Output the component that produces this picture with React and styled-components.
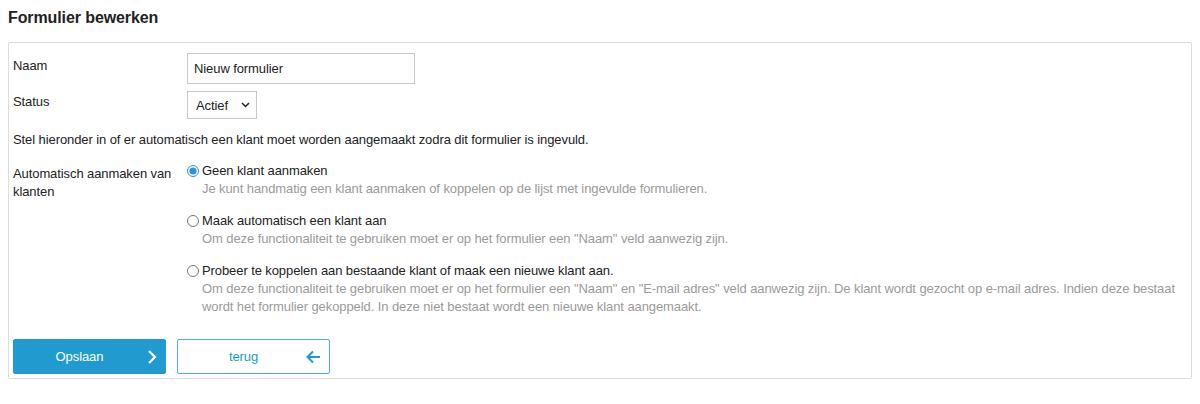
import React from 'react';
import styled, { createGlobalStyle } from 'styled-components';

const GlobalStyle = createGlobalStyle`
  body {
    margin: 8px;
    font-family: "Liberation Sans", Arial, sans-serif;
    font-size: 13px;
    letter-spacing: -0.09px;
    color: #222;
    background: #fff;
  }
`;

const Title = styled.h2`
  margin: 0 0 14px;
  font-size: 16px;
  line-height: 20px;
  font-weight: bold;
  letter-spacing: -0.1px;
  color: #222;
`;

const Panel = styled.div`
  border: 1px solid #dcdcdc;
  border-radius: 2px;
  padding: 10px 4px 4px;
`;

const Row = styled.div`
  display: grid;
  grid-template-columns: 174px 1fr;
  align-items: start;
  margin-top: ${props => props.gap || 0}px;
`;

const Label = styled.div`
  line-height: 18px;
  padding-top: ${props => props.offset || 0}px;
  padding-right: 10px;
`;

const TextInput = styled.input`
  box-sizing: border-box;
  width: 228px;
  height: 31px;
  border: 1px solid #c8c8c8;
  padding: 0 6px;
  font: inherit;
  letter-spacing: inherit;
  color: #222;
  outline: none;
`;

const SelectWrap = styled.div`
  position: relative;
  width: 70px;
  height: 28px;
`;

const Select = styled.select`
  box-sizing: border-box;
  width: 100%;
  height: 100%;
  appearance: none;
  border: 1px solid #c8c8c8;
  border-radius: 0;
  background: #fff;
  padding: 0 0 0 8px;
  font: inherit;
  letter-spacing: inherit;
  color: #222;
`;

const SelectArrow = styled.svg`
  position: absolute;
  right: 7px;
  top: 11px;
  pointer-events: none;
`;

const Intro = styled.p`
  margin: 12px 0 13px;
  line-height: 18px;
`;

const Options = styled.div`
  display: flex;
  flex-direction: column;
  gap: 14px;
`;

const Option = styled.label`
  display: grid;
  grid-template-columns: 15px 1fr;
  line-height: 18px;
`;

const Radio = styled.input`
  width: 12px;
  height: 12px;
  margin: 3px 0 0 0;
  accent-color: #2a93dc;
`;

const OptionTitle = styled.span`
  color: #222;
`;

const OptionDesc = styled.span`
  grid-column: 2;
  color: #9a9a9a;
`;

const Actions = styled.div`
  display: flex;
  gap: 11px;
  margin-top: 23px;
`;

const Button = styled.button`
  box-sizing: border-box;
  position: relative;
  width: 153px;
  height: 35px;
  border-radius: 2px;
  font: inherit;
  letter-spacing: inherit;
  font-size: 13px;
  border: 1px solid ${props => (props.$primary ? '#219ad0' : '#4aaede')};
  background: ${props => (props.$primary ? '#219ad0' : '#fff')};
  color: ${props => (props.$primary ? '#fff' : '#219ad0')};
  display: flex;
  align-items: center;
  justify-content: center;
  padding: 0 20px 0 0;
  cursor: pointer;
`;

const ButtonIcon = styled.svg`
  position: absolute;
  right: 8px;
  top: 50%;
  transform: translateY(-50%);
`;

export default function App() {
  return (
    <>
      <GlobalStyle />
      <Title>Formulier bewerken</Title>
      <Panel>
        <Row>
          <Label offset={4}>Naam</Label>
          <TextInput defaultValue="Nieuw formulier" />
        </Row>
        <Row gap={7}>
          <Label offset={2}>Status</Label>
          <SelectWrap>
            <Select defaultValue="actief">
              <option value="actief">Actief</option>
              <option value="inactief">Inactief</option>
            </Select>
            <SelectArrow width="9" height="6" viewBox="0 0 9 6">
              <path d="M1 1l3.5 3.5L8 1" fill="none" stroke="#222" strokeWidth="1.5" />
            </SelectArrow>
          </SelectWrap>
        </Row>
        <Intro>
          Stel hieronder in of er automatisch een klant moet worden aangemaakt zodra dit formulier is ingevuld.
        </Intro>
        <Row>
          <Label offset={3}>Automatisch aanmaken van klanten</Label>
          <Options>
            <Option>
              <Radio type="radio" name="klant" defaultChecked />
              <OptionTitle>Geen klant aanmaken</OptionTitle>
              <OptionDesc>
                Je kunt handmatig een klant aanmaken of koppelen op de lijst met ingevulde formulieren.
              </OptionDesc>
            </Option>
            <Option>
              <Radio type="radio" name="klant" />
              <OptionTitle>Maak automatisch een klant aan</OptionTitle>
              <OptionDesc>
                Om deze functionaliteit te gebruiken moet er op het formulier een "Naam" veld aanwezig zijn.
              </OptionDesc>
            </Option>
            <Option>
              <Radio type="radio" name="klant" />
              <OptionTitle>Probeer te koppelen aan bestaande klant of maak een nieuwe klant aan.</OptionTitle>
              <OptionDesc>
                Om deze functionaliteit te gebruiken moet er op het formulier een "Naam" en "E-mail adres" veld
                aanwezig zijn. De klant wordt gezocht op e-mail adres. Indien deze bestaat wordt het formulier
                gekoppeld. In deze niet bestaat wordt een nieuwe klant aangemaakt.
              </OptionDesc>
            </Option>
          </Options>
        </Row>
        <Actions>
          <Button $primary>
            Opslaan
            <ButtonIcon width="10" height="16" viewBox="0 0 10 16">
              <path d="M2 2l6 6-6 6" fill="none" stroke="#fff" strokeWidth="2.2" />
            </ButtonIcon>
          </Button>
          <Button>
            terug
            <ButtonIcon width="16" height="14" viewBox="0 0 16 14">
              <path d="M15 7H2.5M8 1.5L2.5 7 8 12.5" fill="none" stroke="#219ad0" strokeWidth="2" />
            </ButtonIcon>
          </Button>
        </Actions>
      </Panel>
    </>
  );
}
